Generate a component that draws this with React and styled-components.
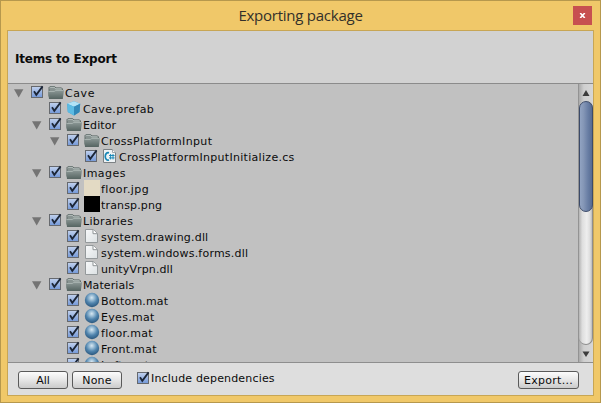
import React from "react";
import styled, { createGlobalStyle } from "styled-components";

const Global = createGlobalStyle`
  * { box-sizing: border-box; }
  html, body { margin: 0; padding: 0; overflow: hidden; }
  svg { display: block; flex: none; }
`;

const Window = styled.div`
  width: 601px;
  height: 403px;
  display: flex;
  flex-direction: column;
  padding: 0 6px 6px;
  border: 1px solid #b6984d;
  background: #f0c869;
  font: 11px/16px "DejaVu Sans", Verdana, sans-serif;
  color: #0b0b0b;
`;

const TitleBar = styled.header`
  height: 29px;
  flex: none;
  display: grid;
  grid-template-columns: 1fr auto 1fr;
`;

const Title = styled.h1`
  grid-column: 2;
  margin: 0;
  padding: 4px 0 0;
  font: 400 15px/20px "Open Sans", "Segoe UI", sans-serif;
  letter-spacing: -0.25px;
  color: #33302a;
  white-space: nowrap;
`;

const CloseButton = styled.button`
  justify-self: end;
  width: 19px;
  height: 19px;
  margin: 5px 2px 0 0;
  padding: 0;
  border: 0;
  display: flex;
  align-items: center;
  justify-content: center;
  background: #c75050;
`;

const Client = styled.main`
  flex: 1;
  min-height: 0;
  display: flex;
  flex-direction: column;
  border: 1px solid #c8a654;
`;

const Heading = styled.div`
  height: 53px;
  flex: none;
  padding: 20px 0 0 7px;
  border-bottom: 1px solid #8b8b8b;
  background: #d2d2d2;
  font-weight: 700;
  font-size: 12px;
  white-space: nowrap;
  letter-spacing: -0.2px;
`;

const ListArea = styled.section`
  flex: 1;
  min-height: 0;
  display: flex;
  background: #c1c1c1;
`;

const Tree = styled.div`
  flex: 1;
  min-width: 0;
  overflow: hidden;
`;

const Row = styled.div`
  height: 16px;
  display: flex;
  padding-left: ${(p) => 5 + p.$depth * 18}px;
`;

const Toggle = styled.span`
  width: 18px;
  flex: none;
  padding: 5px 0 0 1px;
`;

const Label = styled.span`
  padding-top: 2px;
  white-space: nowrap;
  letter-spacing: ${(p) => p.$spacing ?? 0}px;
`;

const IconSlot = styled.span`
  width: 17px;
  flex: none;
`;

const Swatch = styled.span`
  display: block;
  width: 16px;
  height: 16px;
  background: ${(p) => p.$color};
`;

const ScrollBar = styled.div`
  width: 15px;
  flex: none;
  display: flex;
  flex-direction: column;
  border-left: 1px solid #939393;
  background: linear-gradient(90deg, #aaa, #cfcfcf 35%, #d6d6d6);
`;

const ScrollButton = styled.div`
  height: 17px;
  flex: none;
  display: flex;
  align-items: center;
  justify-content: center;
`;

const Track = styled.div`
  flex: 1;
  border: 1px solid #8e8e8e;
  border-width: 0 1px 1px 0;
  border-radius: 7px;
  background: linear-gradient(90deg, #b4b4b4, #dedede 25%, #eee 60%, #dcdcdc 85%, #bbb);
`;

const Thumb = styled.div`
  width: 14px;
  height: 111px;
  border: 1px solid #3c4b69;
  border-radius: 7px;
  background: linear-gradient(90deg, #91a3c2, #8496b6 30%, #6a7fa5 65%, #566b92);
`;

const Footer = styled.footer`
  height: 33px;
  flex: none;
  display: flex;
  align-items: flex-start;
  padding: 8px 14px 0 10px;
  border-top: 1px solid #8e8e8e;
  background: #dedede;
`;

const Button = styled.button`
  width: ${(p) => p.$width}px;
  height: 18px;
  margin: 0;
  padding: 1px 0 0;
  border: 1px solid #5a5a5a;
  border-radius: 3px;
  background: linear-gradient(#fcfcfc, #e6e6e6 50%, #cbcbcb);
  font: inherit;
  line-height: 16px;
  letter-spacing: ${(p) => p.$spacing ?? 0}px;
  color: #0b0b0b;
  & + & { margin-left: 4px; }
`;

const Dependencies = styled.label`
  display: flex;
  flex: 1;
  padding-left: 15px;
  margin-top: -1px;
  ${Label} { padding-top: 1px; margin-left: -3px; }
`;

const Arrow = () => (
  <svg width="10" height="9" viewBox="0 0 10 9">
    <path d="M0 .2h9.4L4.7 8.5z" fill="#747474" />
  </svg>
);

const Check = () => (
  <svg width="17" height="16" viewBox="0 0 17 16">
    <rect x="0.5" y="2.5" width="11" height="11" fill="url(#boxFill)" stroke="#66696e" />
    <path d="M3 7.2 5.3 10.8 11.6 2.4" fill="none" stroke="#1c2637" strokeWidth="1.8" />
  </svg>
);

const Folder = () => (
  <svg width="16" height="16" viewBox="0 0 16 16">
    <path d="M1 12V3.5L2 2.5h4.5L8 3.9h5.5L14.5 5v8H1.5z" fill="#889391" stroke="#606c6a" />
    <path d="M1.7 4.1 2.5 3.3h3.8l1.4 1.6h5.8" fill="none" stroke="#b9c2c0" />
    <path d="M0 7.2h6L7.5 6H16L14.8 15H1z" fill="url(#folderFill)" />
    <path d="M.5 7.5h5.8l1.5-1.1h7.7" fill="none" stroke="#b0bab8" strokeWidth=".8" />
  </svg>
);

const Prefab = () => (
  <svg width="16" height="16" viewBox="0 0 16 16">
    <path d="m8 1.2 6.2 2.6L13.5 12 8 15.5 1.8 12 1.2 3.8z" fill="#3c9ccb" />
    <path d="m8 1.2 6.2 2.6L8 6.8 1.2 3.8z" fill="#b0e2f6" />
    <path d="M1.2 3.8 8 6.8v8.7L1.8 12z" fill="#5cbbe3" />
    <path d="M8 6.8v8.7l5.5-3.5.7-8.2z" fill="#3288b8" />
  </svg>
);

const Script = () => (
  <svg width="16" height="16" viewBox="0 0 16 16">
    <path d="M1.5 1.5h9l3 3v10h-12z" fill="#eef3f5" stroke="#7c8184" />
    <path d="M10.5 1.5v3h3" fill="#fff" stroke="#a1a6a8" />
    <path d="M7 4.8C2 3.6 2 13.2 7 12" fill="none" stroke="#1686b5" strokeWidth="1.7" />
    <path d="M8.6 6v5.4M11 6v5.4M7 7.5h5.6M7 9.9h5.6" fill="none" stroke="#1686b5" strokeWidth=".95" />
  </svg>
);

const File = () => (
  <svg width="16" height="16" viewBox="0 0 16 16">
    <path d="M1.5 1.5h8l4 4v9h-12z" fill="url(#pageFill)" stroke="#94999b" />
    <path d="M9 1.5v4.2h4.3" fill="#fff" stroke="#8e9395" />
  </svg>
);

const Sphere = () => (
  <svg width="16" height="16" viewBox="0 0 16 16">
    <circle cx="8" cy="8" r="7.2" fill="url(#sphereFill)" />
  </svg>
);

const Defs = () => (
  <svg width="0" height="0">
    <defs>
      <linearGradient id="boxFill" x2="0" y2="1">
        <stop stopColor="#c2d2ee" /><stop offset="1" stopColor="#7398d8" />
      </linearGradient>
      <linearGradient id="folderFill" x2="0" y2="1">
        <stop stopColor="#8e9a98" /><stop offset="1" stopColor="#556461" />
      </linearGradient>
      <linearGradient id="pageFill" x2="1" y2="1">
        <stop stopColor="#f8f9fa" /><stop offset="1" stopColor="#dce1e3" />
      </linearGradient>
      <radialGradient id="sphereFill" cx=".48" cy=".34" r=".65">
        <stop stopColor="#d8e8f2" /><stop offset=".3" stopColor="#94b8d2" />
        <stop offset=".6" stopColor="#5084ad" /><stop offset="1" stopColor="#2b587f" />
      </radialGradient>
    </defs>
  </svg>
);

const icons = {
  folder: <Folder />,
  prefab: <Prefab />,
  script: <Script />,
  file: <File />,
  material: <Sphere />,
  floor: <Swatch $color="#e3dac4" />,
  black: <Swatch $color="#000" />,
};

// [depth, icon, name, letter spacing]
const items = [
  [0, "folder", "Cave", 0.6],
  [1, "prefab", "Cave.prefab", 0.4],
  [1, "folder", "Editor", 0.1],
  [2, "folder", "CrossPlatformInput", 0.35],
  [3, "script", "CrossPlatformInputInitialize.cs", 0.3],
  [1, "folder", "Images", 0.45],
  [2, "floor", "floor.jpg", 0.4],
  [2, "black", "transp.png", 0.15],
  [1, "folder", "Libraries", 0.3],
  [2, "file", "system.drawing.dll", 0.18],
  [2, "file", "system.windows.forms.dll", 0.21],
  [2, "file", "unityVrpn.dll", 0.12],
  [1, "folder", "Materials", 0.1],
  [2, "material", "Bottom.mat", 0.15],
  [2, "material", "Eyes.mat", 0.3],
  [2, "material", "floor.mat", 0.3],
  [2, "material", "Front.mat", 0.3],
  [2, "material", "Left.mat", 0.3],
];

export default function App() {
  return (
    <Window>
      <Global />
      <TitleBar>
        <Title>Exporting package</Title>
        <CloseButton aria-label="Close">
          <svg width="7" height="5" viewBox="0 0 7 5">
            <path d="M1.2 0 5.8 5M5.8 0 1.2 5" stroke="#fff" strokeWidth="1.6" />
          </svg>
        </CloseButton>
      </TitleBar>
      <Client>
        <Heading>Items to Export</Heading>
        <ListArea>
          <Tree>
            {items.map(([depth, icon, name, spacing]) => (
              <Row key={name} $depth={depth}>
                <Toggle>{icon === "folder" && <Arrow />}</Toggle>
                <Check />
                <IconSlot>{icons[icon]}</IconSlot>
                <Label $spacing={spacing}>{name}</Label>
              </Row>
            ))}
          </Tree>
          <ScrollBar>
            <ScrollButton>
              <svg width="8" height="6" viewBox="0 0 8 6"><path d="M4 0 7.5 6h-7z" fill="#3c3c3c" /></svg>
            </ScrollButton>
            <Track><Thumb /></Track>
            <ScrollButton>
              <svg width="8" height="6" viewBox="0 0 8 6"><path d="M.5.5h7L4 6z" fill="#3c3c3c" /></svg>
            </ScrollButton>
          </ScrollBar>
        </ListArea>
        <Footer>
          <Button $width={50}>All</Button>
          <Button $width={50} $spacing={0.2}>None</Button>
          <Dependencies>
            <Check />
            <Label $spacing={0.17}>Include dependencies</Label>
          </Dependencies>
          <Button $width={61} $spacing={0.3}>Export...</Button>
        </Footer>
        <Defs />
      </Client>
    </Window>
  );
}
